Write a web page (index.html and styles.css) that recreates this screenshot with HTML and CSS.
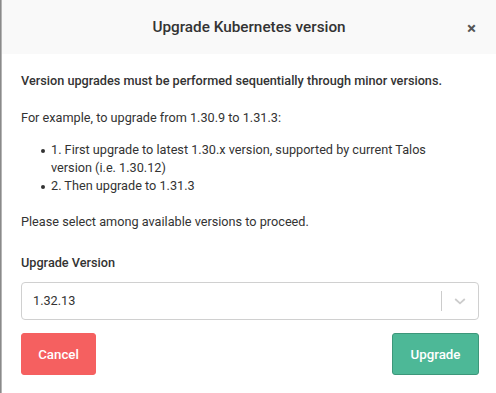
FILE: index.html
```html
<!DOCTYPE html>
<html lang="en">
<head>
  <meta charset="UTF-8">
  <title>Upgrade Kubernetes version</title>
  <link rel="stylesheet" href="styles.css">
</head>
<body>
  <div class="modal">
    <!-- HEADER -->
    <div class="modal-header">
      <h3 class="modal-title">Upgrade Kubernetes version</h3>
      <span class="close">&times;</span>
    </div>

    <!-- BODY -->
    <div class="modal-body">
      <p class="lead">Version upgrades must be performed sequentially through minor versions.</p>
      <p>For example, to upgrade from 1.30.9 to 1.31.3:</p>
      <ul class="steps">
        <li>1. First upgrade to latest 1.30.x version, supported by current Talos version (i.e. 1.30.12)</li>
        <li>2. Then upgrade to 1.31.3</li>
      </ul>
      <p>Please select among available versions to proceed.</p>

      <label class="field-label">Upgrade Version</label>
      <div class="select">
        <span class="select-value">1.32.13</span>
        <span class="select-sep"></span>
        <span class="select-arrow">
          <svg width="16" height="16" viewBox="0 0 20 20"><path d="M4 7.5 L10 13 L16 7.5" fill="none" stroke="#ccc" stroke-width="2.2"/></svg>
        </span>
      </div>

      <div class="actions">
        <button class="btn btn-cancel">Cancel</button>
        <button class="btn btn-upgrade">Upgrade</button>
      </div>
    </div>
  </div>
</body>
</html>
```

FILE: styles.css
```css
* {
  margin: 0;
  padding: 0;
  box-sizing: border-box;
}
body {
  background: #8a8a8a;
  font-family: Roboto, "Liberation Sans", sans-serif;
  color: #333;
  height: 393px;
  overflow: hidden;
  padding-left: 1px;
}

/* MODAL */
.modal {
  height: 100%;
  background: #fff;
  border-left: 1px solid #b5b5b5;
}

.modal-header {
  position: relative;
  height: 54px;
  background: #f9f9f9;
  display: flex;
  align-items: center;
  justify-content: center;
}
.modal-title {
  font-size: 15.3px;
  font-weight: 500;
  color: #333;
}
.close {
  position: absolute;
  right: 20px;
  top: 18px;
  font-size: 17px;
  font-weight: 700;
  color: #555;
}

.modal-body {
  padding: 18px 17px 0 19px;
  font-size: 12.7px;
  line-height: 18px;
}
.modal-body p {
  margin-bottom: 15px;
}
.modal-body .lead {
  font-weight: 500;
  margin-bottom: 19px;
}
.steps {
  list-style: none;
  padding-left: 30px;
  padding-right: 45px;
  margin-top: -1px;
  margin-bottom: 18px;
}
.steps li {
  position: relative;
}
.steps li::before {
  content: "";
  position: absolute;
  left: -10px;
  top: 8px;
  width: 4px;
  height: 4px;
  border-radius: 50%;
  background: #333;
}

.field-label {
  display: block;
  font-weight: 500;
  margin-top: 23px;
  margin-bottom: 10px;
}

.select {
  display: flex;
  align-items: center;
  height: 38px;
  border: 1px solid #d0d0d0;
  border-radius: 4px;
  padding-left: 11px;
}
.select-value {
  flex: 1;
}
.select-sep {
  width: 1px;
  height: 20px;
  background: #ccc;
}
.select-arrow {
  width: 36px;
  display: flex;
  justify-content: center;
}

.actions {
  display: flex;
  justify-content: space-between;
  margin-top: 13px;
}
.btn {
  font-family: inherit;
  font-size: 13.3px;
  font-weight: 500;
  color: #fff;
  height: 42px;
  border-radius: 3px;
}
.btn-cancel {
  width: 75px;
  background: #f56060;
  border: 1px solid #f56060;
}
.btn-upgrade {
  width: 87px;
  background: #4db897;
  border: 1px solid #3d977a;
}
```
